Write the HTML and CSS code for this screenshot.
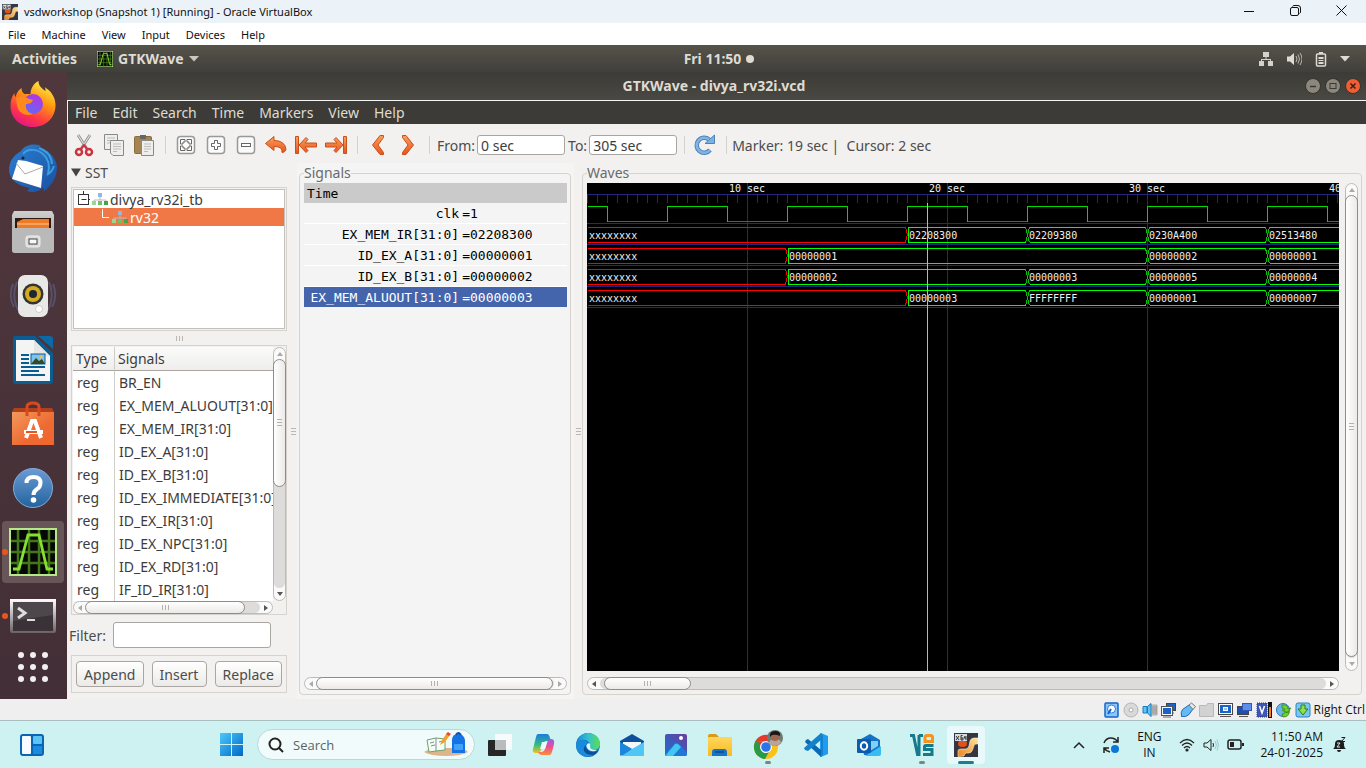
FILE: index.html
```html
<!DOCTYPE html>
<html lang="en">
<head>
<meta charset="utf-8">
<title>vsdworkshop (Snapshot 1) [Running] - Oracle VirtualBox</title>
<link rel="stylesheet" href="styles.css">
</head>
<body>
<svg class="defs" aria-hidden="true">
  <defs>
    <linearGradient id="orange" x1="0" y1="0" x2="0" y2="1"><stop offset="0" stop-color="#f9a05a"/><stop offset="1" stop-color="#e9531d"/></linearGradient>
    <linearGradient id="fox" x1="0.8" y1="0" x2="0.3" y2="1"><stop offset="0" stop-color="#fff44f"/><stop offset=".4" stop-color="#ff980e"/><stop offset=".75" stop-color="#ff3647"/><stop offset="1" stop-color="#e31587"/></linearGradient>
    <linearGradient id="globe" x1="0.7" y1="0" x2="0.2" y2="1"><stop offset="0" stop-color="#b833e1"/><stop offset="1" stop-color="#5b6df8"/></linearGradient>
    <linearGradient id="bird" x1="0" y1="0" x2="1" y2="1"><stop offset="0" stop-color="#2c7fd0"/><stop offset="1" stop-color="#1a4fa0"/></linearGradient>
    <linearGradient id="metal" x1="0" y1="0" x2="0" y2="1"><stop offset="0" stop-color="#cfcfcf"/><stop offset="1" stop-color="#8f8f8f"/></linearGradient>
    <linearGradient id="bag" x1="0" y1="0" x2="1" y2="1"><stop offset="0" stop-color="#f29a5c"/><stop offset=".6" stop-color="#ee6a33"/><stop offset="1" stop-color="#f0652e"/></linearGradient>
    <linearGradient id="helpblue" x1="0" y1="0" x2="0" y2="1"><stop offset="0" stop-color="#6b9bd6"/><stop offset="1" stop-color="#22649c"/></linearGradient>
    <linearGradient id="term" x1="0" y1="0" x2="0" y2="1"><stop offset="0" stop-color="#ffffff"/><stop offset="1" stop-color="#6a6164"/></linearGradient>
    <linearGradient id="win" x1="0" y1="0" x2="1" y2="1"><stop offset="0" stop-color="#4cc9fa"/><stop offset="1" stop-color="#0067c8"/></linearGradient>
    <linearGradient id="edgeg" x1="0" y1="0.3" x2="1" y2="0.3"><stop offset="0" stop-color="#1b8fd8"/><stop offset=".5" stop-color="#35c1d0"/><stop offset="1" stop-color="#5be04e"/></linearGradient>
    <linearGradient id="cpa" x1="0" y1="0" x2="0" y2="1"><stop offset="0" stop-color="#1d7be0"/><stop offset=".55" stop-color="#2fb98a"/><stop offset="1" stop-color="#f2c512"/></linearGradient>
    <linearGradient id="cpb" x1="0" y1="0" x2="0" y2="1"><stop offset="0" stop-color="#9a5bea"/><stop offset=".5" stop-color="#ee4f8e"/><stop offset="1" stop-color="#fb8f3b"/></linearGradient>
    <linearGradient id="photo" x1="0" y1="1" x2="1" y2="0"><stop offset="0" stop-color="#1a6fd0"/><stop offset="1" stop-color="#6a3f9e"/></linearGradient>
    <linearGradient id="folder" x1="0" y1="0" x2="0" y2="1"><stop offset="0" stop-color="#ffd75e"/><stop offset="1" stop-color="#f9b920"/></linearGradient>
    <linearGradient id="vboxo" x1="0" y1="1" x2="1" y2="0"><stop offset="0" stop-color="#f08018"/><stop offset="1" stop-color="#ffe3a0"/></linearGradient>
    <symbol id="vbox" viewBox="0 0 24 24"><rect width="24" height="24" fill="#343743"/><path d="M4 23.500V18q0-2 3-2h5q2 0 3-3l1-5q1-3 4-3h4v6h-2q-2 0-2.500 3l-1 3q-1 3-4 3h-2q-2 0-2.500 3z" fill="url(#vboxo)" stroke="#fff0c0" stroke-width=".6"/><ellipse cx="8.500" cy="10.500" rx="4.500" ry="3.500" fill="#e2501c"/><rect x="1" y="1" width="12" height="7" fill="#d9dadd"/><path d="M2 3l3 4M5 3L2 7M8.500 2.500H7V7h2V5H7M11 3l-1 2h2M12 3v4" stroke="#222" stroke-width=".9" fill="none"/></symbol>
    <symbol id="gtkwave" viewBox="0 0 48 48"><rect width="48" height="48" fill="#b6e88a"/><rect x="2" y="2" width="44" height="44" fill="#050805"/><path d="M9 2v44M20 2v44M30 2v44M40 2v44M2 13h44M2 24h44M2 35h44" stroke="#44761c" stroke-width="2.500"/><path d="M4 41h6l9-34h11l8 34h6" fill="none" stroke="#85e02f" stroke-width="2.800"/></symbol>
    <symbol id="tree" viewBox="0 0 16 14"><path d="M8 5v3M2 9V8h12v1" fill="none" stroke="#bbb"/><rect x="6" y="1" width="4" height="4" fill="#8db8e8"/><rect x="0" y="9" width="4" height="4" fill="#9ad890"/><rect x="6" y="9" width="4" height="4" fill="#6fc263"/><rect x="12" y="9" width="4" height="4" fill="#44a544"/></symbol>
  </defs>
</svg>

<header class="host-title">
  <svg class="i16"><use href="#vbox"/></svg>
  <h1>vsdworkshop (Snapshot 1) [Running] - Oracle VirtualBox</h1>
  <div class="host-controls">
    <button aria-label="Minimize"><svg width="10" height="10"><path d="M0 5.500h10" stroke="#111"/></svg></button>
    <button aria-label="Restore"><svg width="11" height="11" fill="none" stroke="#111"><rect x=".5" y="2.500" width="8" height="8" rx="1.500"/><path d="M2.500 1.500q.5-1 1.500-1h4q2.500 0 2.500 2.500v4q0 1-1 1.500"/></svg></button>
    <button aria-label="Close"><svg width="11" height="11" stroke="#111"><path d="M.5.500l10 10M10.500.500l-10 10"/></svg></button>
  </div>
</header>
<nav class="host-menu" aria-label="Machine menu">
  <button>File</button><button>Machine</button><button>View</button><button>Input</button><button>Devices</button><button>Help</button>
</nav>

<main class="guest">
  <div class="topbar">
    <div class="topbar-left">
      <button>Activities</button>
      <button class="app-menu"><svg class="i16"><use href="#gtkwave"/></svg>GTKWave<svg width="10" height="6"><path d="M0 0h10l-5 5.500z" fill="#ccc8c0"/></svg></button>
    </div>
    <button class="clock">Fri 11:50 <svg width="8" height="8"><circle cx="4" cy="4" r="4" fill="#dfdbd2"/></svg></button>
    <div class="topbar-right">
      <svg width="16" height="16" fill="#d5d1c8"><path d="M5 1h6v5H5zM1 10h5v5H1zM10 10h5v5h-5zM7.500 6h1v2H13v2h-1V9H4v1H3V8h4.500z"/></svg>
      <svg width="16" height="16"><path d="M1 5.500h3L8 2v12L4 10.500H1z" fill="#dfdbd2"/><path d="M10 5q2 3 0 6M12 3.500q3 4.500 0 9M14 2q4 6 0 12" fill="none" stroke="#bbb7ae"/></svg>
      <svg width="14" height="16"><path d="M5 1h4v2H5z" fill="#dfdbd2"/><rect x="2.500" y="3" width="9" height="12" rx="1" fill="none" stroke="#dfdbd2" stroke-width="1.500"/><path d="M4.500 6h5v2h-5zM4.500 9h5v1h-5zM4.500 11h5v2h-5z" fill="#dfdbd2"/></svg>
      <svg width="10" height="6"><path d="M0 0h10l-5 5.500z" fill="#dfdbd2"/></svg>
    </div>
  </div>

  <div class="desktop">
    <nav class="dock" aria-label="Dock">
      <button aria-label="Firefox"><svg width="48" height="48" viewBox="0 0 48 48"><path d="M24 47C10 47 1.500 37 1.500 26c0-5 1-9 4-13 0 2 0 3 1 4 1-4 3-7 6-9 0 3 1 5 3 6h6c0-5 3-11 8-13 0 5 3 7 7 10 0-2 0-3-1-4 7 4 11 11 11 18 0 13-10 22-22.500 22z" fill="url(#fox)"/><circle cx="24" cy="24" r="10" fill="url(#globe)"/><path d="M7 18c4-3 9-2 13 1l4 1c-1 3-4 4-7 4-1 5 2 9 7 10-7 3-15-1-16-9z" fill="#ff8a1e"/></svg></button>
      <button aria-label="Thunderbird"><svg width="48" height="48" viewBox="0 0 48 48"><path d="M0 27c0-10 4-15 12-20C16 1 24-1 32 2l-3 2c10 1 18 9 19 19 0 10-5 19-14 25 1-2 1-3 0-4-5 4-11 5-16 3l3-3C9 42 1 36 0 27z" fill="url(#bird)"/><path d="M14 10C19 4 28 5 34 10c6 5 7 12 5 20 4-2 5-5 6-8M30 4q12 4 13 16" fill="none" stroke="#3c9de0" stroke-width="2"/><path d="M9 16l8 1 17 5-2 22L3 35z" fill="#fff"/><path d="M7 19l9 11 18-7" fill="none" stroke="#aaa"/><circle cx="14" cy="14" r="1.500" fill="#102540"/></svg></button>
      <button aria-label="Files"><svg width="48" height="48" viewBox="0 0 48 48"><path d="M5 3h38l2 4v35q0 3-3 3H6q-3 0-3-3V7z" fill="url(#metal)"/><rect x="6" y="10" width="36" height="12" fill="#2c1a12"/><path d="M8 14l6-3h26v9H8z" fill="#ef7a26"/><path d="M8 16h32" stroke="#ffc995"/><path d="M3 20h42v22q0 3-3 3H6q-3 0-3-3z" fill="#b9b9b9"/><rect x="17" y="28" width="14" height="11" rx="2" fill="#ddd" stroke="#eee"/><rect x="20" y="31" width="8" height="5" fill="#f8f8f8" stroke="#444"/></svg></button>
      <button aria-label="Rhythmbox"><svg width="48" height="48" viewBox="0 0 48 48"><path d="M8 10q-6 13 1 28M4 12q-5 12 1 23M40 10q6 13-1 28M44 12q5 12-1 23" stroke="#565069" stroke-width="2" fill="none"/><rect x="9" y="3" width="30" height="42" rx="7" fill="#e8e8e6"/><circle cx="24" cy="22" r="10.500" fill="#333"/><circle cx="24" cy="22" r="8" fill="#d3ab1e"/><circle cx="24" cy="22" r="4" fill="#1e2733"/><circle cx="30" cy="37" r="3.500" fill="#fff" stroke="#ccc"/></svg></button>
      <button aria-label="LibreOffice Writer"><svg width="48" height="48" viewBox="0 0 48 48"><path d="M6 0h20l18 17v28q0 3-3 3H7q-3 0-3-3V3q0-3 2-3z" fill="#0b5c92"/><path d="M29 0h12q3 0 3 3v10z" fill="#0b6aa5"/><path d="M7 4h18l16 16v25H7z" fill="#f4f4f4"/><path d="M25 4v16h16z" fill="#e5e5e5"/><path d="M12 19h8M12 23h8M12 27h8M12 31h24M12 35h18M12 39h24" stroke="#0b5c92" stroke-width="2"/><rect x="22" y="18" width="14" height="10" fill="#7cc4ee" stroke="#0b5c92"/><path d="M22 28l5-6 3 3 3-2 3 5z" fill="#354a20"/><circle cx="32" cy="21" r="1.500" fill="#f5c132"/></svg></button>
      <button aria-label="Ubuntu Software"><svg width="48" height="48" viewBox="0 0 48 48"><path d="M5 8h38l2 4H3z" fill="#b2401a"/><path d="M3 12h42v33H3z" fill="url(#bag)"/><path d="M18 16V7q0-4 6-4t6 4v9" fill="none" stroke="#d84a1e" stroke-width="3"/><path d="M17 38l6-17h3l6 17M15 32h19" stroke="#fff" stroke-width="4" fill="none"/><path d="M17 32h11" stroke="#e95420" stroke-width="2"/></svg></button>
      <button aria-label="Help"><svg width="48" height="48" viewBox="0 0 48 48"><circle cx="24" cy="24" r="19.500" fill="url(#helpblue)" stroke="#84aad8"/><path d="M17.500 19q0-6 7-6 7 0 7 6 0 4-4 6.500-3 2-3 5.500" fill="none" stroke="#fff" stroke-width="4"/><circle cx="24.500" cy="36" r="2.800" fill="#fff"/></svg></button>
      <button class="running active" aria-label="GTKWave"><svg width="48" height="48"><use href="#gtkwave"/></svg></button>
      <button class="running" aria-label="Terminal"><svg width="48" height="48" viewBox="0 0 48 48"><path d="M1 7h46v32q0 2-2 2H3q-2 0-2-2z" fill="url(#term)"/><rect x="4" y="10" width="40" height="29" fill="#3a3237"/><path d="M4 10h40v13L4 29z" fill="#4d474b"/><path d="M9 16l7 5-7 5" fill="none" stroke="#ddd" stroke-width="3"/><path d="M18 28h8" stroke="#ddd" stroke-width="2"/></svg></button>
      <button class="apps" aria-label="Show Applications"><svg width="30" height="30" fill="#f2f0ee"><circle cx="3" cy="3" r="3"/><circle cx="15" cy="3" r="3"/><circle cx="27" cy="3" r="3"/><circle cx="3" cy="15" r="3"/><circle cx="15" cy="15" r="3"/><circle cx="27" cy="15" r="3"/><circle cx="3" cy="27" r="3"/><circle cx="15" cy="27" r="3"/><circle cx="27" cy="27" r="3"/></svg></button>
    </nav>

    <section class="gtk">
      <div class="gtk-title">
        <h2>GTKWave - divya_rv32i.vcd</h2>
        <div class="gtk-controls">
          <button aria-label="Minimize"><svg width="16" height="16"><circle cx="8" cy="8" r="7.500" fill="#8b877c" stroke="#35342f"/><path d="M5 8.500h6" stroke="#3a3934" stroke-width="1.500"/></svg></button>
          <button aria-label="Maximize"><svg width="16" height="16"><circle cx="8" cy="8" r="7.500" fill="#8b877c" stroke="#35342f"/><rect x="5" y="5.500" width="6" height="5" fill="none" stroke="#3a3934"/></svg></button>
          <button aria-label="Close"><svg width="16" height="16"><circle cx="8" cy="8" r="7.500" fill="#ee5e32" stroke="#35342f"/><path d="M5.500 5.500l5 5M10.500 5.500l-5 5" stroke="#3a2018" stroke-width="1.500"/></svg></button>
        </div>
      </div>
      <nav class="gtk-menu" aria-label="GTKWave menu">
        <button>File</button><button>Edit</button><button>Search</button><button>Time</button><button>Markers</button><button>View</button><button>Help</button>
      </nav>

      <div class="toolbar">
        <button aria-label="Cut"><svg width="22" height="24"><path d="M5 2l9 14M17 2L8 16" stroke="#999" stroke-width="3"/><path d="M5 2l9 14M17 2L8 16" stroke="#e8e8e8" stroke-width="1"/><circle cx="6" cy="19" r="3" fill="none" stroke="#cc3340" stroke-width="2.500"/><circle cx="16" cy="19" r="3" fill="none" stroke="#cc3340" stroke-width="2.500"/><path d="M8 16l3-4 3 4" fill="none" stroke="#cc3340" stroke-width="2"/></svg></button>
        <button aria-label="Copy"><svg width="22" height="24" fill="#eeeeec" stroke="#888a85"><path d="M1.500 1.500h13v15h-13z"/><path d="M4 5h8M4 7.500h8M4 10h8" stroke="#bbb"/><path d="M7.500 7.500h13v15H10l-2.500-2.500z"/><path d="M10 11h8M10 13.500h8M10 16h8M10 18.500h4" stroke="#bbb"/></svg></button>
        <button aria-label="Paste"><svg width="22" height="24"><rect x="1.500" y="3.500" width="17" height="17" rx="1" fill="#a58453" stroke="#8a6d3f"/><path d="M7 2h6v4H7z" fill="#666"/><g fill="#eeeeec" stroke="#888a85"><path d="M8.500 7.500h12v15h-12z"/><path d="M11 11h7M11 13.500h7M11 16h7M11 18.500h4" stroke="#bbb"/></g></svg></button>
        <i class="sep"></i>
        <button aria-label="Zoom Fit"><svg width="20" height="20" viewBox="0 0 20 20"><rect x="1.500" y="1.500" width="17" height="17" rx="3" fill="#fafafa" stroke="#999" stroke-width="1.500"/><path d="M4.500 9V4.500H9v2.500H7v2zM11 4.500h4.500V9H13V7h-2zM4.500 11H7v2h2v2.500H4.500zM13 11h2.500v4.500H11V13h2z" fill="#fff" stroke="#666"/></svg></button>
        <button aria-label="Zoom In"><svg width="20" height="20"><rect x="1.500" y="1.500" width="17" height="17" rx="3" fill="#fafafa" stroke="#999" stroke-width="1.500"/><path d="M8.500 5.500h3v3h3v3h-3v3h-3v-3h-3v-3h3z" fill="#fff" stroke="#666"/></svg></button>
        <button aria-label="Zoom Out"><svg width="20" height="20"><rect x="1.500" y="1.500" width="17" height="17" rx="3" fill="#fafafa" stroke="#999" stroke-width="1.500"/><rect x="5.500" y="8.500" width="9" height="3" fill="#fff" stroke="#666"/></svg></button>
        <button aria-label="Zoom Undo"><svg width="24" height="20" fill="url(#orange)" stroke="#c9501a"><path d="M1.500 8.500L10 1.500v4q11 0 12 9-1 3-4 3 1-6-8-6v4z"/></svg></button>
        <button aria-label="Zoom to Start"><svg width="24" height="20" fill="url(#orange)" stroke="#c9501a"><path d="M1.500 1.500h3v17h-3zM5 10l7-7.500 2 2L11 8h11.500v4H11l3 3.500-2 2z"/></svg></button>
        <button aria-label="Zoom to End"><svg width="24" height="20" fill="url(#orange)" stroke="#c9501a"><path d="M22.500 1.500h-3v17h3zM19 10l-7-7.500-2 2L13 8H1.500v4H13l-3 3.500 2 2z"/></svg></button>
        <i class="sep"></i>
        <button aria-label="Find Previous Edge"><svg width="14" height="22" fill="url(#orange)" stroke="#c9501a"><path d="M9 1.500h3.500v2L7 11l5.500 7.500v2H9L1.500 11z"/></svg></button>
        <button aria-label="Find Next Edge"><svg width="14" height="22" fill="url(#orange)" stroke="#c9501a"><path d="M5 1.500H1.500v2L7 11l-5.500 7.500v2H5l7.500-9.500z"/></svg></button>
        <i class="sep"></i>
        <label for="from">From:</label><input id="from" type="text" value="0 sec">
        <label for="to">To:</label><input id="to" type="text" value="305 sec">
        <i class="sep"></i>
        <button aria-label="Reload"><svg width="22" height="22"><path d="M16 16A7.500 7.500 0 1 1 15 5.500" fill="none" stroke="#4d83bd" stroke-width="4.500"/><path d="M11 9.500h9.500V1z" fill="#7fb0e2" stroke="#4d83bd"/><path d="M16 16A7.500 7.500 0 1 1 15 5.500" fill="none" stroke="#84b3e4" stroke-width="2.500"/></svg></button>
        <i class="sep"></i>
        <output>Marker: 19 sec | &nbsp;Cursor: 2 sec</output>
      </div>

      <div class="panes">
        <aside class="sst">
          <button class="expander"><svg width="10" height="9"><path d="M0 .5h10L5 8.500z" fill="#444"/></svg>SST</button>
          <div class="frame tree-frame">
            <ul class="tree">
              <li><svg width="12" height="16" fill="none" stroke="#333"><path d="M5.500 0v3M10.500 8.500h2M3.500 8.500h5"/><rect x=".5" y="3.500" width="10" height="10"/></svg><svg width="16" height="14"><use href="#tree"/></svg>divya_rv32i_tb</li>
              <li class="selected"><svg width="8" height="16" fill="none" stroke="#fff"><path d="M.5 0v8.500H7"/></svg><svg width="16" height="14"><use href="#tree"/></svg>rv32</li>
            </ul>
          </div>
          <i class="grip"></i>
          <div class="frame list-frame">
            <div class="list-view">
              <table>
                <thead><tr><th>Type</th><th>Signals</th></tr></thead>
                <tbody>
                  <tr><td>reg</td><td>BR_EN</td></tr>
                  <tr><td>reg</td><td>EX_MEM_ALUOUT[31:0]</td></tr>
                  <tr><td>reg</td><td>EX_MEM_IR[31:0]</td></tr>
                  <tr><td>reg</td><td>ID_EX_A[31:0]</td></tr>
                  <tr><td>reg</td><td>ID_EX_B[31:0]</td></tr>
                  <tr><td>reg</td><td>ID_EX_IMMEDIATE[31:0]</td></tr>
                  <tr><td>reg</td><td>ID_EX_IR[31:0]</td></tr>
                  <tr><td>reg</td><td>ID_EX_NPC[31:0]</td></tr>
                  <tr><td>reg</td><td>ID_EX_RD[31:0]</td></tr>
                  <tr><td>reg</td><td>IF_ID_IR[31:0]</td></tr>
                </tbody>
              </table>
            </div>
            <div class="scroll v"><i class="arrow up dim"></i><div class="track"><div class="thumb" style="height:56%"></div></div><i class="arrow down"></i></div>
            <div class="scroll h"><i class="arrow left dim"></i><div class="track"><div class="thumb" style="width:92%"></div></div><i class="arrow right"></i></div>
          </div>
          <div class="filter"><label for="filter">Filter:</label><input id="filter" type="text"></div>
          <div class="frame actions"><button>Append</button><button>Insert</button><button>Replace</button></div>
        </aside>

        <i class="grip side"></i>

        <div class="signals-pane">
          <fieldset class="signals">
            <legend>Signals</legend>
            <table>
              <colgroup><col class="name-col"><col></colgroup>
              <thead><tr><th colspan="2">Time</th></tr></thead>
              <tbody>
                <tr><td>clk</td><td>=1</td></tr>
                <tr><td>EX_MEM_IR[31:0]</td><td>=02208300</td></tr>
                <tr><td>ID_EX_A[31:0]</td><td>=00000001</td></tr>
                <tr><td>ID_EX_B[31:0]</td><td>=00000002</td></tr>
                <tr class="selected"><td>EX_MEM_ALUOUT[31:0]</td><td>=00000003</td></tr>
              </tbody>
            </table>
            <div class="scroll h"><i class="arrow left dim"></i><div class="track"><div class="thumb" style="width:100%"></div></div><i class="arrow right dim"></i></div>
          </fieldset>
        </div>

        <i class="grip side"></i>

        <fieldset class="waves">
          <legend>Waves</legend>
          <div class="wave-grid">
            <div class="canvas">
              <svg class="plot" width="100%" height="100%">
                <defs><pattern id="ticks" width="10" height="9" patternUnits="userSpaceOnUse" y="11"><rect width="1" height="9" fill="#25257e"/></pattern></defs>
                <rect x="0" y="11" width="100%" height="9" fill="url(#ticks)"/>
                <g fill="#25257e">
                  <rect y="11" width="100%" height="1"/><rect y="40" width="100%" height="1"/><rect y="61" width="100%" height="1"/><rect y="82" width="100%" height="1"/><rect y="103" width="100%" height="1"/><rect y="124" width="100%" height="1"/>
                  <rect x="160" width="1" height="100%"/><rect x="360" width="1" height="100%"/><rect x="560" width="1" height="100%"/><rect x="760" width="1" height="100%"/>
                </g>
                <g transform="translate(.5 .5)" fill="none" stroke="#0f0">
                  <path d="M20 38h60M140 38h60M260 38h60M380 38h60M500 38h60M620 38h60M740 38h60" stroke="#009a00"/>
                  <path d="M0 23h20v15M80 38V23h60v15M200 38V23h60v15M320 38V23h60v15M440 38V23h60v15M560 38V23h60v15M680 38V23h60v15" stroke="#00d800"/>
                  <path d="M0 44h318l2 7-2 8H0M0 65h198l2 7-2 8H0M0 86h198l2 7-2 8H0M0 107h318l2 7-2 8H0" stroke="#f00"/>
                  <path d="M438 44H321v15h117M442 44h116M442 59h116M562 44h116M562 59h116M682 44h116M682 59h116"/>
                  <path d="M558 65H201v15h357M562 65h116M562 80h116M682 65h116M682 80h116"/>
                  <path d="M438 86H201v15h237M442 86h116M442 101h116M562 86h116M562 101h116M682 86h116M682 101h116"/>
                  <path d="M438 107H321v15h117M442 107h116M442 122h116M562 107h116M562 122h116M682 107h116M682 122h116"/>
                  <path d="M438 44l4 15m-4 0l4-15M558 44l4 15m-4 0l4-15M678 44l4 15m-4 0l4-15M558 65l4 15m-4 0l4-15M678 65l4 15m-4 0l4-15M438 86l4 15m-4 0l4-15M558 86l4 15m-4 0l4-15M678 86l4 15m-4 0l4-15M438 107l4 15m-4 0l4-15M558 107l4 15m-4 0l4-15M678 107l4 15m-4 0l4-15" stroke="#00c800"/>
                </g>
                <g class="wave-text">
                  <text x="142" y="9">10 sec</text><text x="342" y="9">20 sec</text><text x="542" y="9">30 sec</text><text x="742" y="9">40 sec</text>
                  <text x="2" y="56">xxxxxxxx</text><text x="322" y="56">02208300</text><text x="442" y="56">02209380</text><text x="562" y="56">0230A400</text><text x="682" y="56">02513480</text>
                  <text x="2" y="77">xxxxxxxx</text><text x="202" y="77">00000001</text><text x="562" y="77">00000002</text><text x="682" y="77">00000001</text>
                  <text x="2" y="98">xxxxxxxx</text><text x="202" y="98">00000002</text><text x="442" y="98">00000003</text><text x="562" y="98">00000005</text><text x="682" y="98">00000004</text>
                  <text x="2" y="119">xxxxxxxx</text><text x="322" y="119">00000003</text><text x="442" y="119">FFFFFFFF</text><text x="562" y="119">00000001</text><text x="682" y="119">00000007</text>
                </g>
                <rect x="340" y="20" width="1" height="100%" fill="#ff9a9a"/>
              </svg>
            </div>
            <div class="scroll v"><i class="arrow up dim"></i><div class="track"><div class="thumb" style="height:100%"></div></div><i class="arrow down dim"></i></div>
            <div class="scroll h"><i class="arrow left"></i><div class="track offset"><div class="thumb" style="width:12%"></div></div><i class="arrow right"></i></div>
          </div>
        </fieldset>
      </div>
    </section>
  </div>
</main>

<footer class="vm-status">
  <svg width="16" height="16"><rect x="1" y="1" width="13" height="14" rx="1" fill="#8cc6f8" stroke="#1464c8" stroke-width="1.500"/><circle cx="7.500" cy="7" r="4" fill="#fff" stroke="#2d7bd8"/><path d="M7 7l-3 5" stroke="#1464c8" stroke-width="2"/></svg>
  <svg width="16" height="16"><circle cx="8" cy="8" r="7" fill="#d9d9d9" stroke="#b5b5b5"/><circle cx="8" cy="8" r="2" fill="#fff" stroke="#aaa"/></svg>
  <svg width="16" height="16"><path d="M8 3h7v10H8z" fill="#ccc" stroke="#aaa"/><path d="M10 5h5M10 7h5M10 9h5M10 11h5" stroke="#888"/><path d="M1 4.500h4V11H1zM5.500 4.500L9 1.500v13L5.500 11z" fill="#62c4f2" stroke="#1a78be"/></svg>
  <svg width="16" height="16"><rect x="5.500" y="1.500" width="9" height="7" fill="#1b62c9" stroke="#444"/><path d="M7 11h6" stroke="#666"/><rect x="1.500" y="5.500" width="9" height="7" fill="#1b62c9" stroke="#f5f5f5"/><rect x=".5" y="4.500" width="11" height="9" fill="none" stroke="#555"/><path d="M2 15h8" stroke="#666"/></svg>
  <svg width="16" height="16"><path d="M1.500 14.500q-1-4 1-7L9 3l4 4-4 5.500q-3 3-7.500 2z" fill="#63baf4" stroke="#246ab4"/><path d="M9 3l2.500-2 4 3.500-2.500 3z" fill="#e8e8e8" stroke="#777"/></svg>
  <svg width="16" height="16"><path d="M.5 3.500h7l1-2h6v13H.5z" fill="#d2d2d2" stroke="#b8b8b8"/></svg>
  <svg width="16" height="16"><rect x=".5" y="1.500" width="14" height="11" fill="#fff" stroke="#444"/><rect x="2" y="3" width="11" height="8" fill="#1b62c9"/><rect x="5.500" y="5.500" width="4" height="3" fill="#8cc6f8" stroke="#fff"/><path d="M2 14.500h11" stroke="#555"/></svg>
  <svg width="16" height="16"><rect x=".5" y="4.500" width="11" height="8" fill="#1d51b0" stroke="#444"/><path d="M2 14.500h9" stroke="#555"/><rect x="5.500" y="1.500" width="9" height="7" fill="#5b8fee" stroke="#3455b4"/></svg>
  <svg width="17" height="16"><rect x="1" y="1" width="10" height="14" fill="#3f55b8" stroke="#243a8c" stroke-dasharray="1 1"/><path d="M3.500 4L6 11l2.500-7" fill="none" stroke="#fff" stroke-width="1.500"/><path d="M12 0h4v16h-4z" fill="#111"/><path d="M13 5h2v10h-2z" fill="#f58220"/></svg>
  <svg width="16" height="16"><circle cx="7" cy="8" r="6.500" fill="#67b7ee" stroke="#2b77b8"/><path d="M6 3q6-1 6 4l3-1-4 5-5-3h3q0-2-3-2zM13 10q0 5-6 5l-1-3q3 0 3-2z" fill="#73d02a" stroke="#3a8a10" stroke-width=".8"/></svg>
  <svg width="16" height="16"><rect x="1" y="1" width="14" height="14" rx="2" fill="#78c8f4" stroke="#2b82c8"/><path d="M6 3h4v4h3l-5 6-5-6h3z" fill="#8be24a" stroke="#2f7d18"/></svg>
  <span>Right Ctrl</span>
</footer>

<nav class="taskbar" aria-label="Taskbar">
  <button class="task widgets" aria-label="Widgets"><svg width="24" height="24"><rect x="0" y="1" width="24" height="22" rx="3" fill="#0a66b4"/><rect x="2" y="3" width="9" height="18" rx="1" fill="#f5fbff"/><rect x="13" y="3" width="9" height="8" rx="1" fill="#5cc4f5"/><rect x="13" y="13" width="9" height="8" rx="1" fill="#1b8be0"/></svg></button>
  <div class="tasks">
    <button class="task" aria-label="Start"><svg width="24" height="24"><path d="M0 0h11v11H0zM12 0h11v11H12zM0 12h11v11H0zM12 12h11v11H12z" fill="url(#win)"/></svg></button>
    <div class="search">
      <svg width="16" height="16" fill="none" stroke="#222" stroke-width="2"><circle cx="7" cy="7" r="5.500"/><path d="M11 11l4 4"/></svg>
      <input type="search" aria-label="Search" placeholder="Search">
      <svg width="46" height="28"><path d="M1 21q4-3 10-4h24q6 0 10 4-6 4-22 4T1 21z" fill="#dcb68a"/><path d="M4 9l9-2 9 1v11l-9 1-7 1z" fill="#f4fff4" stroke="#6fa06c"/><path d="M13 7v13M7 12l4-1M8 15l4-1M16 11l4-1" stroke="#889"/><path d="M17 14l2-5 5-7 3 2-5 7z" fill="#f6a02c"/><path d="M23 3l2-2 3 2-2 2z" fill="#e5463b"/><path d="M29 9q0-6 6-6t7 6v13H29z" fill="#1673e6"/><path d="M33 4q2-4 5 0" stroke="#0b4fae" stroke-width="2" fill="none"/><rect x="31" y="13" width="9" height="6" rx="1" fill="#3fa3f8"/></svg>
    </div>
    <button class="task" aria-label="Task View"><svg width="24" height="24"><rect x="7" y="1" width="17" height="16" rx="1" fill="#f8fbfb"/><rect x="0" y="7" width="18" height="16" rx="1" fill="#262626"/><path d="M7 7h11v10H7z" fill="#b9bcbc"/></svg></button>
    <button class="task" aria-label="Copilot"><svg width="24" height="24"><path d="M6 1h9q2 0 3 4l1 3h-5q-2 0-3 3l-2 6q-1 3-4 3H4q-4 0-3-4L4 4q.5-3 2-3z" fill="url(#cpa)"/><path d="M18 22H9q-2 0-3-3h4q2 0 3-3l2-6q1-4 4-4 4 0 3 5l-2 8q-1 3-2 3z" fill="url(#cpb)"/><path d="M10 9h5l-2 7H8z" fill="#eefafa"/></svg></button>
    <button class="task" aria-label="Edge"><svg width="24" height="24"><circle cx="12" cy="12" r="12" fill="#1167b8"/><path d="M1 9C3 3 7 0 12 0c7 0 12 5 12 11 0 4-3 6-6 6-4 0-5-2-4-4 1-5-8-9-13-4z" fill="url(#edgeg)"/><path d="M0 12q0-5 6-5 5 0 7 4-4 1-4 6 1 5 8 5-5 3-10 1-7-3-7-11z" fill="#1a8bdc"/><path d="M10 12q-1 3 1 5 4 4 11 1-1 2-3 3-8 2-11-3-1-4 2-6z" fill="#0c4f94"/><path d="M14 13q1-2-1-3-4 2-2 5 3 4 8 3 3-1 5-3-1 2-5 2-5 0-5-4z" fill="#dcf8f6"/></svg></button>
    <button class="task" aria-label="Mail"><svg width="26" height="24"><path d="M1 8l12-7 12 7v14H1z" fill="#0e4f9e"/><path d="M4 9h18v8H4z" fill="#f4f8fc"/><path d="M1 9l12 7L1 23z" fill="#1f9ce8"/><path d="M25 9L1 23h24z" fill="#4fc7f5"/><path d="M1 9l12 7-9 6H1z" fill="#1b86da"/></svg></button>
    <button class="task" aria-label="Photos"><svg width="24" height="24"><rect x="1" y="1" width="22" height="22" rx="2" fill="url(#photo)"/><circle cx="17" cy="5" r="2" fill="#fff"/><path d="M1 21l10-11q2-1 4 1l8 9v1q0 2-2 2H3q-2 0-2-2z" fill="#1f78d8"/><path d="M2 22l9-11q2-1 4 1l2 2-8 9H3z" fill="#41c6f2"/></svg></button>
    <button class="task" aria-label="File Explorer"><svg width="26" height="24"><path d="M1 3q0-2 2-2h6l3 3v4H1z" fill="#dc9a10"/><rect x="1" y="4" width="24" height="19" rx="1" fill="url(#folder)"/><path d="M5 23v-4q0-3 3-3h9q3 0 3 3v4z" fill="#1673c8"/><path d="M8 19h9" stroke="#0b559e" stroke-width="2"/></svg></button>
    <button class="task step open" aria-label="Chrome"><svg width="30" height="30"><circle cx="13" cy="17" r="12" fill="#fbc116"/><path d="M2.500 11A12 12 0 0 1 24 12H13z" fill="#e33b2e"/><path d="M2.500 11A12 12 0 0 0 12 29l5-9-4-3z" fill="#2a9a4a"/><path d="M3 11l5 9 6-8z" fill="#e33b2e"/><path d="M3 11l5 9" stroke="#2a9a4a" stroke-width="3"/><circle cx="13" cy="17" r="6" fill="#fff"/><circle cx="13" cy="17" r="4.800" fill="#2a73e8"/><circle cx="22" cy="8" r="8" fill="#6d7b75"/><path d="M16 14q0-5 6-5t6 4q-3 3-6 3t-6-2z" fill="#b9a39a"/><circle cx="22" cy="7" r="4" fill="#9c6650"/><path d="M17 7q-1-6 5-6t5 5q-4-2-8-1z" fill="#1d1614"/></svg></button>
    <button class="task step" aria-label="Visual Studio Code"><svg width="24" height="24"><path d="M17 0l7 3v18l-7 3-1-1V1z" fill="#1f9cf0"/><path d="M17 24L1 9l1-2 2-1 13 11z" fill="#0b6ab4"/><path d="M17 0L0 15l1 2 3 1L17 7z" fill="#1581cc"/><path d="M17 0v24l2-3V3z" fill="#1581cc"/></svg></button>
    <button class="task leap" aria-label="Outlook"><svg width="26" height="24"><path d="M5 6l9-5 10 6v13q0 2-2 2H8z" fill="#1572c6"/><path d="M8 8h14v5l-8 5-6-3z" fill="#7ed0f7"/><path d="M25 8v13q0 2-2 2H9l16-10z" fill="#37bdf2"/><rect x="1" y="6" width="14" height="14" rx="1" fill="#0a5cad"/><ellipse cx="8" cy="13" rx="3.200" ry="3.800" fill="none" stroke="#fff" stroke-width="2"/></svg></button>
    <button class="task leap open" aria-label="VirtualBox"><svg width="26" height="24" fill="none" stroke="#147a8c" stroke-width="3"><path d="M1 2.500h3.500l4 19h1.500V2M10 2.500h4M24.500 12.500H17q-1.500 0-1.500 1.500v2.500H23v5h-9"/><path d="M16 8.500V4.500q0-2 2-2h3.500q2 0 2 2v4z" stroke="#f6921e"/></svg></button>
    <button class="task current" aria-label="vsdworkshop"><svg width="24" height="24"><use href="#vbox"/></svg></button>
  </div>
  <div class="tray">
    <button aria-label="Show hidden icons"><svg width="12" height="8"><path d="M1 7l5-5 5 5" fill="none" stroke="#222" stroke-width="1.500"/></svg></button>
    <button aria-label="Sync"><svg width="18" height="18" fill="none" stroke="#222" stroke-width="1.500"><path d="M2 7q2-5 7-5 4 0 7 4M16 1v5h-5M8 16q-4-1-6-4M2 17v-5h5"/><circle cx="13" cy="13" r="4" fill="#0a78d8" stroke="none"/></svg></button>
    <button class="lang">ENG<br>IN</button>
    <button class="net" aria-label="Network, volume and battery">
      <svg width="16" height="14" fill="none" stroke="#222" stroke-width="1.200"><path d="M1 5q7-7 14 0M3 7.500q5-5 10 0M5 10q3-3 6 0"/><circle cx="8" cy="12" r="1" fill="#222"/></svg>
      <svg width="16" height="14" fill="none" stroke="#222"><path d="M1 5h3l4-3.500v11L4 9H1z"/><path d="M10 5q1 2 0 4"/><path d="M12 3q3 4 0 8M14 1.500q3 5.500 0 11" stroke="#9cc"/></svg>
      <svg width="17" height="12"><rect x="1" y="1" width="13" height="9" rx="2" fill="none" stroke="#222" stroke-width="1.500"/><path d="M3 3h4v5H3zM15 4h2v3h-2z" fill="#222"/></svg>
    </button>
    <button class="time">11:50 AM<br>24-01-2025</button>
    <button aria-label="Notifications"><svg width="14" height="16"><path d="M1 12q2-1 2-5 0-4 4-4 5 0 5 4 0 4 2 5zM5 13h4q0 2-2 2t-2-2z" fill="#1c1c1c"/><path d="M5 6h3l-3 4h3" fill="none" stroke="#cdf2f1"/><path d="M9.500.5H13l-3.500 4H13" fill="none" stroke="#1c1c1c"/></svg></button>
  </div>
</nav>
</body>
</html>
```
FILE: styles.css
```css
* { box-sizing: border-box; }
body {
  margin: 0;
  height: 100vh;
  display: flex;
  flex-direction: column;
  overflow: hidden;
  background: #efefef;
  font-family: "Noto Sans", "Open Sans", sans-serif;
  font-size: 12px;
  color: #111;
}
button { border: 0; padding: 0; background: none; font: inherit; color: inherit; display: flex; align-items: center; justify-content: center; }
h1, h2 { margin: 0; font-size: inherit; }
svg { display: block; flex: none; }
.defs { position: absolute; width: 0; height: 0; }
.i16 { width: 16px; height: 16px; }

/* Host window chrome */
.host-title { height: 23px; flex: none; display: flex; align-items: center; gap: 6px; padding: 0 2px; background: #ebf3f9; }
.host-title h1 { font-size: 11px; font-weight: 400; flex: 1; }
.host-controls { display: flex; height: 100%; }
.host-controls button { width: 46px; padding-bottom: 2px; }
.host-menu { height: 22px; flex: none; display: flex; background: #fff; font-size: 11px; }
.host-menu button { padding: 0 8px; }

/* Guest shell */
.guest { flex: 1; min-height: 0; display: flex; flex-direction: column; font-size: 14px; color: #4c4c4c; }
.topbar { height: 27px; flex: none; display: grid; grid-template-columns: 53fr auto 47fr; align-items: center; padding: 0 16px 0 12px; background: linear-gradient(#56534a, #403f3a); color: #dfdbd2; font-weight: 700; }
.topbar-left, .topbar-right { display: flex; align-items: center; gap: 20px; }
.topbar-right { justify-content: flex-end; gap: 12px; }
.app-menu, .clock { gap: 5px; }
.desktop { flex: 1; min-height: 0; display: flex; }
.dock { width: 67px; flex: none; background: linear-gradient(#50373c, #432f37); }
.dock button { position: relative; width: 62px; height: 62px; margin: 1px 2px 2px; border-radius: 4px; }
.dock .active { background: #685558; }
.dock .running::before { content: ""; position: absolute; left: 0; top: 28px; width: 6px; height: 6px; border-radius: 50%; background: #e95420; }
.dock .apps { height: 36px; }

/* GTKWave window */
.gtk { flex: 1; min-width: 0; display: flex; flex-direction: column; background: #f2f1ef; }
.gtk-title { height: 28px; flex: none; display: grid; grid-template-columns: 1fr auto 1fr; align-items: center; padding: 0 5px 1px 0; background: linear-gradient(#3c3b37, #4a4842); color: #dfdbd2; }
.gtk-title h2 { grid-column: 2; font-weight: 700; }
.gtk-controls { justify-self: end; display: flex; gap: 4px; }
.gtk-menu { height: 24px; flex: none; display: flex; gap: 1px; margin-left: 1px; border-top: 1px solid #f5f5f5; background: #3c3b37; color: #dfdbd2; }
.gtk-menu button { padding: 0 7px; }
.toolbar { height: 39px; flex: none; display: flex; align-items: center; padding: 3px 0 0 2px; }
.toolbar button { width: 30px; height: 30px; flex: none; }
.sep { width: 12px; height: 18px; flex: none; display: flex; justify-content: center; }
.sep::before { content: ""; width: 1px; background: #d5d2ce; }
.toolbar label { padding: 0 2px; }
input[type=text] { min-width: 0; border: 1px solid #a9a6a2; border-radius: 3px; background: #fff; font: inherit; color: #3c3c3c; padding: 0 3px; }
.toolbar input { width: 88px; height: 20px; margin-right: 1px; }

.panes { flex: 1; min-height: 0; display: flex; padding-right: 4px; }
.sst { width: 222px; flex: none; display: flex; flex-direction: column; padding: 0 2px 6px 4px; }
.expander { justify-content: flex-start; gap: 4px; height: 20px; padding-bottom: 2px; margin-bottom: 4px; flex: none; }
.frame { border: 1px solid #d6d3cf; padding: 1px; }
.tree-frame { height: 144px; flex: none; }
.tree { height: 100%; margin: 0; padding: 0; list-style: none; background: #fff; border: 1px solid #c4c1bd; color: #3c3c3c; }
.tree li { display: flex; align-items: center; gap: 2px; height: 18px; padding-left: 4px; }
.tree li.selected { background: #f07746; color: #fff; padding-left: 28px; }
.grip { width: 7px; height: 14px; align-self: center; flex: none; display: flex; align-items: center; }
.grip::before { content: ""; width: 7px; height: 5px; background: repeating-linear-gradient(90deg, #bbb8b4 0 1px, transparent 1px 3px); }
.grip.side { width: 8px; }
.grip.side::before { height: 7px; width: 5px; margin: auto; background: repeating-linear-gradient(#bbb8b4 0 1px, transparent 1px 3px); }
.list-frame { flex: 1; min-height: 0; display: grid; grid-template-columns: minmax(0, 1fr) 13px; grid-template-rows: minmax(0, 1fr) 13px; padding: 1px 0 0 1px; }
.list-view { overflow: hidden; background: #fff; color: #3c3c3c; }
.list-view table { width: 100%; border-spacing: 0; table-layout: fixed; }
.list-view th, .list-view td { padding: 0 0 0 4px; height: 23px; white-space: nowrap; text-align: left; font-weight: 400; line-height: 20px; }
.list-view th { height: 24px; padding-left: 3px; border-bottom: 1px solid #aaa7a3; background: linear-gradient(#fafafa, #efeeec); }
.list-view :is(th, td):first-child { width: 42px; border-right: 1px solid #d0cdc9; }
.filter { display: flex; align-items: center; gap: 7px; margin: 7px 16px 7px -2px; }
.filter input { flex: 1; height: 26px; }
.actions { display: flex; gap: 8px; padding: 5px 4px; }
.actions button { flex: 1 1 auto; height: 26px; border: 1px solid #aaa7a3; border-radius: 4px; background: linear-gradient(#fff, #ebeae8); }

/* Scrollbars */
.scroll { display: flex; border: 1px solid #bdbab6; border-radius: 7px; background: #fafafa; }
.scroll.h { height: 13px; }
.scroll.v { width: 13px; flex-direction: column; }
.track { flex: 1; min-width: 0; min-height: 0; background: #dedcda; border-radius: 6px; display: flex; }
.scroll.v .track { flex-direction: column; }
.thumb { display: flex; align-items: center; justify-content: center; border-radius: 7px; border: 1px solid #8f8c88; margin: -1px; background: linear-gradient(#fff, #eceae8); }
.scroll.v .thumb { background: linear-gradient(90deg, #fff, #eceae8); }
.thumb::before { content: ""; width: 7px; height: 5px; background: repeating-linear-gradient(90deg, #b5b2ae 0 1px, transparent 1px 3px); }
.scroll.v .thumb::before { width: 5px; height: 7px; background: repeating-linear-gradient(#b5b2ae 0 1px, transparent 1px 3px); }
.track.offset { padding-left: 5px; }
.arrow { width: 12px; height: 12px; flex: none; display: flex; align-items: center; justify-content: center; color: #555; }
.scroll.h .arrow { height: 11px; }
.scroll.v .arrow { width: 11px; }
.arrow.dim { color: #aaa; }
.arrow::before { content: ""; border: 3px solid transparent; }
.arrow.left::before { border-left-width: 0; border-right: 4px solid; }
.arrow.right::before { border-right-width: 0; border-left: 4px solid; }
.arrow.up::before { border-top-width: 0; border-bottom: 4px solid; }
.arrow.down::before { border-bottom-width: 0; border-top: 4px solid; }

/* Signals and waves */
fieldset { margin: 0; min-width: 0; border: 1px solid #d6d3cf; border-radius: 4px; display: flex; flex-direction: column; }
legend { padding: 0; height: 20px; line-height: 20px; color: #6a6a6a; }
.signals-pane { width: 277px; flex: none; display: flex; padding: 0 3px 4px 2px; background: #f4f4f4; }
.signals { flex: 1; padding: 0 3px 4px 4px; }
.signals table { width: 100%; border-spacing: 0; margin-bottom: auto; table-layout: fixed; font-family: "DejaVu Sans Mono", monospace; font-size: 13px; color: #000; }
.name-col { width: 59%; }
.signals th { height: 20px; padding: 2px 3px 0; text-align: left; font-weight: 400; line-height: 18px; background: #cacaca; }
.signals td { height: 21px; line-height: 18px; padding: 2px 0 0; border-bottom: 1px solid #fff; }
.signals td:first-child { text-align: right; }
.signals td:last-child { padding-left: 3px; }
.signals .selected { background: #4464ac; color: #fff; }
.signals .selected td { height: 20px; border: 0; }
.waves { flex: 1; padding: 0 3px 4px 4px; margin-bottom: 4px; }
.wave-grid { flex: 1; min-height: 0; height: 100%; display: grid; grid-template-columns: minmax(0, 1fr) 13px; grid-template-rows: minmax(0, 1fr) 13px; gap: 6px; }
.canvas { background: #000; overflow: hidden; min-height: 0; }
.plot { shape-rendering: crispEdges; }
.wave-text { font-family: "DejaVu Sans Mono", monospace; font-size: 10px; fill: #f0f0f0; }

/* VM status strip */
.vm-status { height: 21px; flex: none; display: flex; align-items: center; justify-content: flex-end; gap: 3px; padding-right: 1px; background: #efefef; font-family: "Open Sans", sans-serif; }

/* Taskbar */
.taskbar { height: 48px; flex: none; display: grid; grid-template-columns: 210px 1fr auto; align-items: center; border-top: 1px solid #a9bfc0; background: #cdf2f1; font-family: "Open Sans", sans-serif; }
.tasks { display: flex; align-items: center; }
.task { position: relative; width: 44px; height: 38px; flex: none; }
.widgets { margin-left: 10px; }
.step { margin-left: 4px; }
.leap { margin-left: 9px; }
.open::after, .current::after { content: ""; position: absolute; bottom: 0; left: 19px; width: 6px; height: 3px; border-radius: 2px; background: #75878a; }
.current { width: 38px; margin-left: 3px; border-radius: 4px; background: #e9f8fa; }
.current::after { left: 11px; width: 16px; background: #1d7d8d; }
.search { width: 218px; height: 31px; display: flex; align-items: center; gap: 7px; margin: 0 3px; padding: 0 5px 0 10px; border: 1px solid #b9d9d9; border-radius: 16px; background: #f1fbfb; }
.search input { flex: 1; min-width: 0; border: 0; background: none; font: inherit; font-size: 13px; }
.search input::placeholder { color: #5b6464; }
.tray { display: flex; align-items: center; padding-right: 11px; line-height: 16px; }
.tray button { min-width: 32px; height: 38px; }
.tray .lang { width: 44px; text-align: center; }
.tray .net { gap: 8px; padding: 0 8px; }
.tray .time { text-align: right; padding: 0 0 0 8px; }
```
